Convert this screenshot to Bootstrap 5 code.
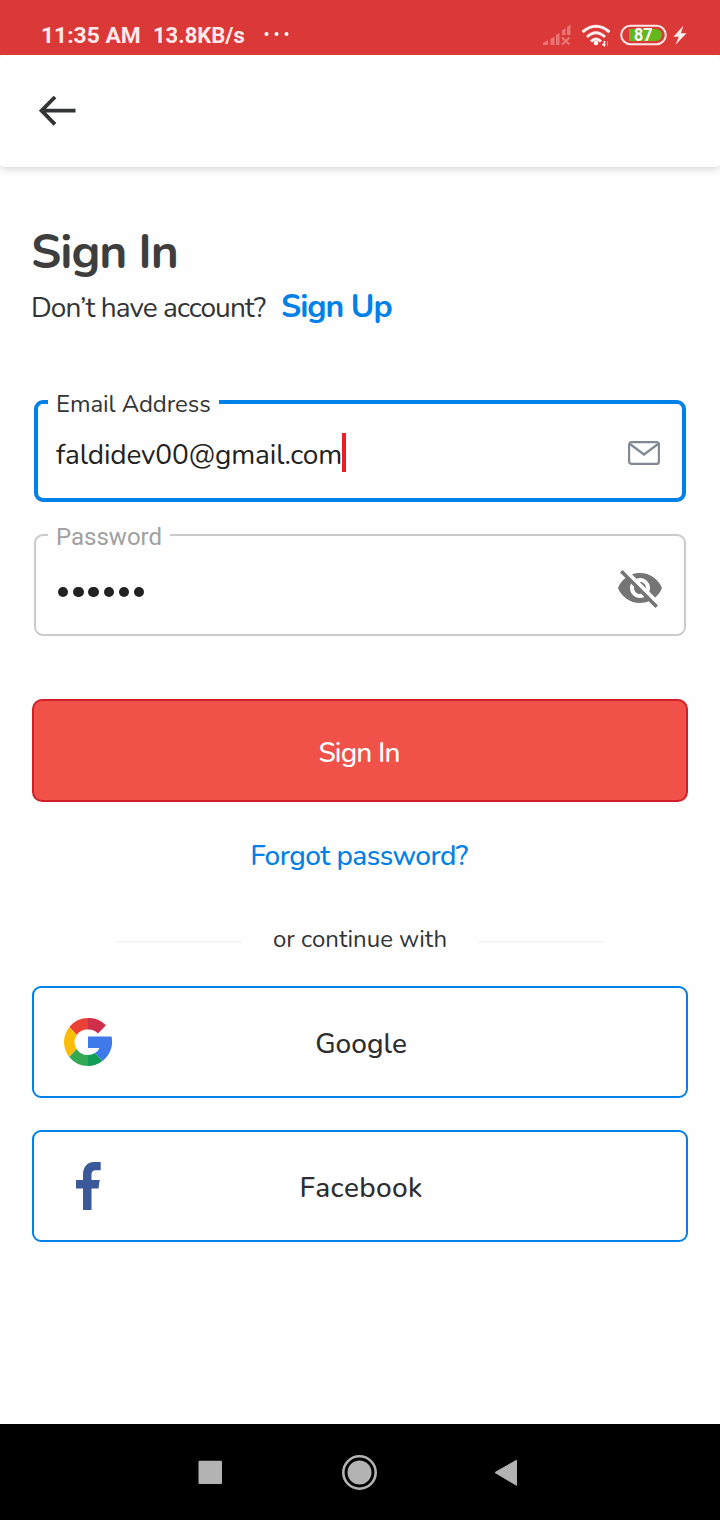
<!DOCTYPE html>
<html lang="en">
<head>
<meta charset="utf-8">
<meta name="viewport" content="width=device-width, initial-scale=1">
<title>Sign In</title>
<link href="https://cdn.jsdelivr.net/npm/bootstrap@5.3.0/dist/css/bootstrap.min.css" rel="stylesheet">
<style>
  :root { --brand-blue: #0081e8; --ink: #333435; }
  body { font-family: Nunito, Lato, "Open Sans", sans-serif; color: var(--ink); background: #fefefe; }
  svg { display: block; flex: none; }
  .screen { width: 720px; height: 1520px; }
  .status-bar { height: 55px; padding: 15px 33px 0 41px; background: #db3838; color: #fde9e9; font: 700 22px/41px Roboto, sans-serif; z-index: 1; }
  .clock { font-size: 22.8px; width: 112px; }
  .app-header { height: 112px; padding-left: 39px; background: #fff; border-radius: 4px; box-shadow: 0 1px 8px rgba(0,0,0,.2); }
  .content { padding: 0 32px; }
  .page-title { font-size: 48px; line-height: 60px; font-weight: 700; letter-spacing: -1.05px; color: #3e3e3f; margin: 55px 0 5px -1px; }
  .sub { height: 40px; line-height: 40px; }
  .sub-text { font-size: 28px; letter-spacing: -.92px; width: 235.500px; margin-left: -1px; white-space: nowrap; }
  .blue-link { color: var(--brand-blue); text-decoration: none; }
  .sub .blue-link { font-size: 32px; font-weight: 700; letter-spacing: -1.050px; margin-left: 14.500px; }
  .email-field { margin-top: 73px; }
  .password-field { margin-top: 32px; }
  .field { height: 102px; margin-left: 2px; margin-right: 2px; border: 2px solid #cbcbcb; border-radius: 9px; padding: 14px 22px 0; }
  .field.active { border: 4px solid var(--brand-blue); padding: 8px 22px 0 18px; }
  .field-label { left: 12px; top: -11px; padding: 0 8px; line-height: 24px; font-size: 24px; background: #fefefe; white-space: nowrap; }
  .active .field-label { left: 10px; top: -12px; letter-spacing: -.08px; }
  .password-field .field-label { font-family: Roboto, sans-serif; color: #a1a1a1; }
  .field-value { font-size: 28px; line-height: 39px; letter-spacing: -.14px; color: #222; }
  .caret { width: 4px; height: 39px; margin-top: -5px; background: #ee1c24; }
  .mail-icon { margin-top: -4px; }
  .eye-icon { margin-top: -7px; }
  .dots { gap: 4.800px; }
  .dot { width: 10.400px; height: 10.400px; background: #222; }
  .btn-signin { height: 103px; margin-top: 63px; padding: 10px 14px 6px 12px; background: #f05148; border: 2px solid #d11f28; border-radius: 10px; color: #fff; font-size: 28px; font-weight: 500; letter-spacing: -.85px; }
  .forgot { font-size: 28px; font-weight: 500; line-height: 40px; margin-top: 34px; padding-right: 2px; letter-spacing: -.54px; }
  .or-row { height: 32px; margin-top: 47px; line-height: 32px; font-size: 24px; padding: 0 84px; }
  .rule { width: 125px; height: 2px; background: #f4f4f4; margin-top: 6px; }
  .btn-social { height: 112px; margin-top: 32px; padding: 10px 11px 6px 13px; background: #fff; border: 2px solid var(--brand-blue); border-radius: 9px; color: #2e2e30; font-size: 28px; font-weight: 500; font-kerning: none; }
  .or-row + .btn-social { margin-top: 31px; }
  .facebook-label { letter-spacing: .32px; }
  .social-icon { left: 30px; top: 30px; }
  .nav-keys { height: 96px; background: #000; }
</style>
</head>
<body>
<div class="screen d-flex flex-column">
  <div class="status-bar d-flex flex-shrink-0">
    <span class="clock">11:35 AM</span><span>13.8KB/s</span>
    <svg width="50" height="38" fill="#fff"><circle cx="21.500" cy="19" r="2"/><circle cx="31.500" cy="19" r="2"/><circle cx="41.500" cy="19" r="2"/></svg>
    <svg class="ms-auto" width="145" height="40" viewBox="542 15 145 40">
      <g fill="#e87676"><path d="M543 45v-2l5-3v5zM550.500 45v-6l4-2.500v8.500zM556 45v-10l3.500-2v12zM562 35v-4.500l3.500-2.500v7zM567 35v-8l3.500-2.500v10.500z"/></g>
      <path d="M562 37.500l7.500 7M569.500 37.500l-7.500 7" stroke="#e87676" stroke-width="2.200"/>
      <g fill="none" stroke="#fff0f0" stroke-width="3"><path d="M582.500 32Q596 20.500 609.500 32"/><path d="M587 37Q596 28.500 605 37"/><path d="M591 41.500Q596 36.500 601 41.500"/></g>
      <circle cx="596" cy="43" r="2.300" fill="#fff"/>
      <path d="M604.500 41v5.500M602.500 44l2 2" stroke="#fff" stroke-width="1.600"/><path d="M607.500 46v-5" stroke="#ec8b8b"/>
      <rect x="621.200" y="25.700" width="44.600" height="18.600" rx="9.300" fill="#db3838" stroke="#fde9e9" stroke-width="2"/>
      <path d="M629 29h27a6 6 0 0 1 0 12h-27z" fill="#62b81c"/>
      <text x="634" y="41" textLength="18.500" lengthAdjust="spacingAndGlyphs" font-size="17.500" font-weight="700" fill="#fff">87</text>
      <path d="M683.500 25.500L673.500 36.700h5.300L675.500 44.800 686.500 33.200h-5.600z" fill="#fff0f0"/>
    </svg>
  </div>
  <header class="app-header d-flex align-items-center flex-shrink-0">
    <svg width="38" height="32" viewBox="0 0 38 32" fill="none" stroke="#333435" stroke-width="3.800"><path d="M2 15.700h34.500M16 2L2.500 15.700 16 29.400"/></svg>
  </header>
  <main class="content flex-grow-1">
    <h1 class="page-title">Sign In</h1>
    <div class="sub d-flex align-items-baseline"><span class="sub-text">Don’t have account?</span><a href="#" class="blue-link">Sign Up</a></div>
    <div class="field active email-field position-relative d-flex align-items-center">
      <label class="field-label position-absolute">Email Address</label>
      <span class="field-value">faldidev00@gmail.com</span><span class="caret"></span>
      <svg class="mail-icon ms-auto" width="32" height="24" viewBox="0 0 32 24" fill="none" stroke="#818994" stroke-width="2.200"><rect x="1.100" y="1.100" width="29.800" height="21.800" rx="2.500"/><path d="M2 3l14 10.500L30 3"/></svg>
    </div>
    <div class="field password-field position-relative d-flex align-items-center">
      <label class="field-label position-absolute">Password</label>
      <span class="dots d-flex"><i class="dot rounded-circle"></i><i class="dot rounded-circle"></i><i class="dot rounded-circle"></i><i class="dot rounded-circle"></i><i class="dot rounded-circle"></i><i class="dot rounded-circle"></i></span>
      <svg class="eye-icon ms-auto" width="44" height="38" viewBox="1 3 22 19" fill="#757575"><path d="M12 7c2.760 0 5 2.240 5 5 0 .65-.13 1.260-.36 1.830l2.920 2.920c1.510-1.260 2.700-2.890 3.430-4.750-1.730-4.390-6-7.500-11-7.500-1.400 0-2.740.25-3.980.7l2.160 2.160C10.740 7.130 11.350 7 12 7zM2 4.270l2.280 2.280.46.46C3.080 8.300 1.780 10.020 1 12c1.730 4.390 6 7.500 11 7.500 1.550 0 3.030-.3 4.380-.84l.42.42L19.730 22 21 20.730 3.270 3 2 4.270zM7.530 9.800l1.550 1.550c-.05.21-.08.43-.08.65 0 1.660 1.340 3 3 3 .22 0 .44-.03.65-.08l1.550 1.550c-.67.33-1.410.53-2.200.53-2.760 0-5-2.240-5-5 0-.79.200-1.530.530-2.200zm4.310-.78l3.150 3.150.02-.16c0-1.660-1.340-3-3-3l-.17.010z"/></svg>
    </div>
    <button class="btn btn-signin w-100">Sign In</button>
    <div class="forgot text-center"><a href="#" class="blue-link">Forgot password?</a></div>
    <div class="or-row d-flex justify-content-between align-items-center"><span class="rule"></span><span>or continue with</span><span class="rule"></span></div>
    <button class="btn btn-social w-100 position-relative">
      <svg class="social-icon position-absolute" width="48" height="48" viewBox="0 0 48 48">
        <path fill="#ea4335" d="M24 0A24 24 0 0 0 5.300 9L12.700 17A13 13 0 0 1 24 11.500z"/>
        <path fill="#d02f4b" d="M24 0A24 24 0 0 1 42 7.300L34 15.500A13 13 0 0 0 24 11.500z"/>
        <path fill="#fbbc05" d="M5.300 9A24 24 0 0 0 5.300 39L12.700 31A13 13 0 0 1 12.700 17z"/>
        <path fill="#34a853" d="M5.300 39A24 24 0 0 0 24 48V37A13 13 0 0 1 12.700 31z"/>
        <path fill="#0f9d58" d="M24 48A24 24 0 0 0 38.500 43L31 35A13 13 0 0 1 24 37z"/>
        <path fill="#3e7ae9" d="M24 18.500H47.500A24 24 0 0 1 38.500 43L31 35A10 10 0 0 0 35.500 30H24z"/>
      </svg>Google</button>
    <button class="btn btn-social w-100 position-relative">
      <svg class="social-icon position-absolute" width="48" height="48" viewBox="0 0 48 48" fill="#3b5998"><path d="M19 48V26.500H12V18h7v-5C19 4 24 0 30 0h6.700v8.200H32c-3.400 0-4.500 1.800-4.500 4.500V18h8.200l-1.200 8.500h-7V48z"/></svg><span class="facebook-label">Facebook</span></button>
  </main>
  <footer class="nav-keys flex-shrink-0">
    <svg width="720" height="96" fill="#b3b3b3"><rect x="198.500" y="36.800" width="23.500" height="23.200" rx="1"/><circle cx="359.500" cy="48.500" r="16.200" fill="none" stroke="#b3b3b3" stroke-width="2.600"/><circle cx="359.500" cy="48.500" r="12"/><path d="M495 48.500L516.500 36.300v25z" stroke="#b3b3b3" stroke-linejoin="round"/></svg>
  </footer>
</div>
<script src="https://cdn.jsdelivr.net/npm/bootstrap@5.3.0/dist/js/bootstrap.bundle.min.js"></script>
</body>
</html>
